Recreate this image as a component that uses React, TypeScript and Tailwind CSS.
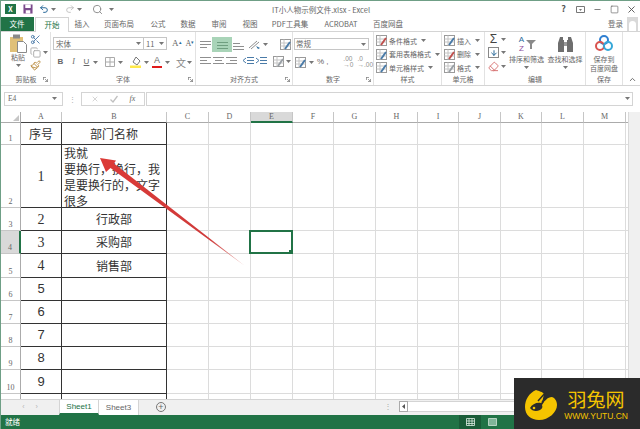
import {
  ArrowDown,
  ChevronUp,
  Copy,
  Eraser,
  Minus,
  Paintbrush,
  Scissors,
  Search,
  Square,
  Undo2,
  Redo2,
  X,
} from "lucide-react";

const cols = ["A", "B", "C", "D", "E", "F", "G", "H", "I", "J", "K", "L", "M", ""];
const rowNames = ["1", "2", "3", "4", "5", "6", "7", "8", "9", "10", ""];
const tabs = [
  ["插入", "w-[26px]"],
  ["页面布局", "w-[48px]"],
  ["公式", "w-[30px]"],
  ["数据", "w-[30px]"],
  ["审阅", "w-[32px]"],
  ["视图", "w-[30px]"],
  ["PDF工具集", "w-[50px]"],
  ["ACROBAT", "w-[52px]"],
  ["百度网盘", "w-[42px]"],
];

const Caret = () => (
  <svg width="5" height="3" viewBox="0 0 5 3" className="shrink-0">
    <path d="M0 0h5L2.5 3z" fill="#777" />
  </svg>
);

const Launcher = () => (
  <svg width="5" height="5" viewBox="0 0 5 5">
    <path d="M0 .5h3M.5 0v3M4.5 2v3M2 4.5h3M2 2l2.5 2.5" stroke="#888" strokeWidth="0.8" fill="none" />
  </svg>
);

// horizontal-line paragraph glyph used all over the alignment group
const Lines = ({ d, color = "#8f8f8f" }: { d: string; color?: string }) => (
  <svg width="11" height="10" viewBox="0 0 11 10">
    <path d={d} stroke={color} strokeWidth="1" fill="none" />
  </svg>
);

const Doc = ({ accent }: { accent: string }) => (
  <svg width="11" height="11" viewBox="0 0 11 11">
    <rect x="0.5" y="0.5" width="10" height="10" fill="#fff" stroke="#9a9a9a" />
    <path d="M.5 4h10M.5 7h10M4 .5v10" stroke="#c4c4c4" />
    <path d="M5 10 10 3" stroke={accent} strokeWidth="2" />
  </svg>
);

function Group({
  label,
  width,
  launcher,
  children,
}: {
  label: string;
  width: string;
  launcher?: boolean;
  children: React.ReactNode;
}) {
  return (
    <div className={`${width} h-full shrink-0 flex flex-col border-r border-[#e2e2e2]`}>
      <div className="flex-1 min-h-0">{children}</div>
      <div className="h-[11px] flex items-center justify-center relative text-[7px] leading-none text-[#666]">
        {label}
        {launcher && (
          <span className="absolute right-[2px] top-[3px] flex">
            <Launcher />
          </span>
        )}
      </div>
    </div>
  );
}

function StyleRow({ icon, text }: { icon: React.ReactNode; text: string }) {
  return (
    <div className="h-[13.5px] flex items-center gap-[2px] text-[7px] text-[#666]">
      {icon}
      <span>{text}</span>
      <span className="ml-[2px]">
        <Caret />
      </span>
    </div>
  );
}

function TitleBar() {
  return (
    <div className="h-[16px] flex items-center relative text-[#666]">
      <div className="w-[11px] h-[10px] ml-[4px] bg-[#217346] text-white text-[7px] leading-[10px] text-center font-bold">
        X
      </div>
      <svg width="10" height="10" viewBox="0 0 11 11" className="ml-[7px]">
        <path d="M.5.5h10v10H.5z" fill="#7b4a8c" />
        <path d="M2.5.5h6v4h-6zM3 7h5v3.5H3z" fill="#fff" />
      </svg>
      <Undo2 size={10} strokeWidth={2.4} className="ml-[6px] text-[#2a6a9a]" />
      <span className="ml-[2px]"><Caret /></span>
      <Redo2 size={10} strokeWidth={2} className="ml-[9px] text-[#bbbbbb]" />
      <span className="ml-[2px]"><Caret /></span>
      <Search size={11} className="ml-[10px] text-[#888]" />
      <span className="ml-[6px]"><Caret /></span>
      <span className="absolute left-[271px] top-[3px] text-[7.5px] leading-[11px] text-[#666]">
        IT小人物示例文件.xlsx - Excel
      </span>
      <div className="ml-auto flex items-center text-[#555]">
        <span className="w-[17px] text-center text-[9px] font-bold">?</span>
        <svg width="9" height="7" viewBox="0 0 9 7" className="mx-[4px]">
          <path d="M.5.5h8v6h-8z" fill="none" stroke="#777" />
          <path d="M3 3h3L4.500 5z" fill="#777" />
        </svg>
        <Minus size={9} strokeWidth={2} className="mx-[4px]" />
        <Square size={9} strokeWidth={1.6} className="mx-[4px]" />
        <X size={11} strokeWidth={2} className="mx-[3px]" />
      </div>
    </div>
  );
}

function TabRow() {
  return (
    <div className="h-[15px] flex items-stretch text-[7.5px] leading-none text-[#666] border-b border-[#d4d4d4]">
      <div className="w-[34px] -ml-px bg-[#217346] text-white flex items-center justify-center">文件</div>
      <div className="w-[34px] ml-px bg-white border border-b-0 border-[#d4d4d4] text-[#217346] flex items-center justify-center h-[15px]">
        开始
      </div>
      {tabs.map(([t, w]) => (
        <div key={t} className={`${w} flex items-center justify-center`}>
          {t}
        </div>
      ))}
      <div className="ml-auto flex items-center">
        <span className="mr-[4px]">登录</span>
        <div className="w-[11px] h-[14px] bg-[#d9d9d9] mr-[2px] flex items-end justify-center overflow-hidden">
          <div className="w-[7px] h-[10px] rounded-t-full bg-white" />
        </div>
      </div>
    </div>
  );
}

function Ribbon() {
  return (
    <div className="h-[54px] flex items-stretch border-b border-[#d4d4d4] pl-[1px] text-[#666]">
      <Group label="剪贴板" width="w-[49px]" launcher>
        <div className="flex pt-[2px] pl-[6px]">
          <div className="w-[20px] flex flex-col items-center">
            <svg width="17" height="19" viewBox="0 0 17 19">
              <rect x="0" y="3" width="13" height="15" fill="#e0c078" />
              <rect x="3" y="0.500" width="7" height="4" fill="#8a8a8a" />
              <path d="M7.500 7.500h6l3 3v8h-9z" fill="#fff" stroke="#8a8a8a" />
            </svg>
            <span className="text-[7px] leading-[9px]">粘贴</span>
            <span className="mt-[2px]"><Caret /></span>
          </div>
          <div className="ml-[2px] flex flex-col gap-[2px] items-start">
            <Scissors size={11} className="text-[#4a7ba8]" />
            <div className="flex items-center gap-[2px]">
              <Copy size={11} className="text-[#aaa]" />
              <Caret />
            </div>
            <Paintbrush size={11} className="text-[#b98a3c]" />
          </div>
        </div>
      </Group>

      <Group label="字体" width="w-[145px]" launcher>
        <div className="pl-[2px] pt-[5px]">
          <div className="flex items-center h-[13px]">
            <div className="w-[91px] h-[13px] border border-[#c6c6c6] flex items-center px-[2px] text-[7.5px]">
              宋体
              <span className="ml-auto"><Caret /></span>
            </div>
            <div className="w-[23px] h-[13px] border border-l-0 border-[#c6c6c6] flex items-center px-[2px] text-[7.5px]">
              11
              <span className="ml-auto"><Caret /></span>
            </div>
            <span className="ml-[5px] text-[9px] font-['Liberation_Serif',serif]">A</span>
            <span className="text-[5px] mb-[4px] text-[#2a6a9a]">▴</span>
            <span className="ml-[4px] text-[8px] font-['Liberation_Serif',serif]">A</span>
            <span className="text-[5px] mb-[4px] text-[#2a6a9a]">▾</span>
          </div>
          <div className="flex items-center mt-[6px] h-[12px] font-['Liberation_Sans',sans-serif] text-[8px]">
            <span className="w-[13px] ml-[1px] text-center font-bold">B</span>
            <span className="w-[13px] text-center italic font-['Liberation_Serif',serif]">I</span>
            <span className="w-[13px] text-center underline">U</span>
            <Caret />
            <svg width="10" height="10" viewBox="0 0 10 10" className="ml-[7px]">
              <path d="M.5.500h9v9h-9zM5 .5v9M.5 5h9" fill="none" stroke="#aaa" />
            </svg>
            <span className="ml-[3px]"><Caret /></span>
            <svg width="12" height="12" viewBox="0 0 12 12" className="ml-[7px]">
              <path d="M6 1l4 4-3 4-4-3z" fill="#fff" stroke="#777" />
              <rect x="0" y="9.500" width="11" height="2.500" fill="#ffe94a" />
            </svg>
            <span className="ml-[2px]"><Caret /></span>
            <div className="ml-[3px] w-[10px] h-[12px] flex flex-col items-center leading-[9px]">
              <span className="text-[9px]">A</span>
              <div className="w-[10px] h-[2px] mt-px bg-[#e01b1b]" />
            </div>
            <span className="ml-[3px]"><Caret /></span>
            <span className="ml-[6px] text-[10px] font-['Noto_Sans_CJK_SC',sans-serif] text-[#888]">文</span>
            <span className="ml-[1px]"><Caret /></span>
          </div>
        </div>
      </Group>

      <Group label="对齐方式" width="w-[97px]" launcher>
        <div className="pt-[5px] pl-[4px]">
          <div className="flex items-center h-[15px]">
            <Lines d="M0 1.500h11M0 4.500h11M0 7.500h7" />
            <div className="w-[20px] h-[15px] mx-[1px] bg-[#a9d4b8] flex items-center justify-center">
              <Lines d="M0 2.500h11M0 5.500h11M0 8.500h11" color="#6f9f80" />
            </div>
            <Lines d="M0 3.500h7M0 6.500h11M0 9.500h11" />
            <svg width="13" height="11" viewBox="0 0 13 11" className="ml-[4px]">
              <path d="M1 9 9 2M3 10l8-7" stroke="#8f8f8f" fill="none" />
              <path d="M8 7l4 2-2 1z" fill="#2a6a9a" />
            </svg>
            <span className="ml-[2px]"><Caret /></span>
            <span className="ml-[12px] flex"><Doc accent="#4a7ba8" /></span>
          </div>
          <div className="flex items-center h-[14px] mt-[2px] gap-[2px]">
            <Lines d="M0 1.500h11M0 4.500h7M0 7.500h11" />
            <Lines d="M0 1.500h11M2 4.500h7M0 7.500h11" />
            <Lines d="M0 1.500h11M4 4.500h7M0 7.500h11" />
            <span className="ml-[4px] flex"><Lines d="M4 1.500h7M4 4.500h7M4 7.500h7M3 2 0 4.500 3 7" color="#4a7ba8" /></span>
            <Lines d="M4 1.500h7M4 4.500h7M4 7.500h7M0 2l3 2.500L0 7" color="#4a7ba8" />
            <span className="ml-[4px] flex"><Doc accent="#9aa0a6" /></span>
            <Caret />
          </div>
        </div>
      </Group>

      <Group label="数字" width="w-[81px]" launcher>
        <div className="pt-[6px] pl-[1px]">
          <div className="w-[75px] h-[12px] border border-[#c6c6c6] flex items-center px-[1px] text-[7.5px]">
            常规
            <span className="ml-auto mr-[1px]"><Caret /></span>
          </div>
          <div className="flex items-center h-[14px] mt-[5px] text-[8px] font-['Liberation_Sans',sans-serif]">
            <span className="ml-[1px] flex"><Doc accent="#4a7ba8" /></span>
            <span className="ml-[3px]"><Caret /></span>
            <span className="ml-[3px]">%</span>
            <span className="ml-[2px]">,</span>
            <span className="ml-[15px] text-[6.500px] leading-[6px] text-[#8f8f8f] w-[16px]">.00 →0</span>
            <span className="text-[6.500px] leading-[6px] text-[#8f8f8f] w-[16px]">.0 →.00</span>
          </div>
        </div>
      </Group>

      <Group label="样式" width="w-[68px]">
        <div className="pt-[1px] pl-[2px] mt-[1px]">
          <StyleRow icon={<Doc accent="#c0504d" />} text="条件格式" />
          <StyleRow icon={<Doc accent="#4a7ba8" />} text="套用表格格式" />
          <StyleRow icon={<Doc accent="#4a7ba8" />} text="单元格样式" />
        </div>
      </Group>

      <Group label="单元格" width="w-[43px]">
        <div className="pt-[1px] pl-[2px] mt-[1px]">
          <StyleRow icon={<Doc accent="#4a7ba8" />} text="插入" />
          <StyleRow icon={<Doc accent="#c0504d" />} text="删除" />
          <StyleRow icon={<Doc accent="#9aa0a6" />} text="格式" />
        </div>
      </Group>

      <Group label="编辑" width="w-[101px]">
        <div className="flex pl-[3px]">
          <div className="w-[19px] pt-[2px] flex flex-col gap-[3px]">
            <div className="flex items-center gap-[2px] h-[10px]">
              <span className="w-[11px] text-[12px] leading-none text-[#444] text-center font-['Liberation_Sans',sans-serif]">Σ</span>
              <Caret />
            </div>
            <div className="flex items-center gap-[2px]">
              <div className="w-[11px] h-[11px] border border-[#888] flex items-center justify-center">
                <ArrowDown size={8} strokeWidth={3} className="text-[#2a6a9a]" />
              </div>
              <Caret />
            </div>
            <div className="flex items-center gap-[2px]">
              <Eraser size={11} className="text-[#d46a6a]" />
              <Caret />
            </div>
          </div>
          <div className="w-[39px] flex flex-col items-center text-[7px] leading-[9px] pt-[2px]">
            <div className="h-[20px] flex items-center">
              <span className="text-[8px] leading-[9px] text-center font-['Liberation_Sans',sans-serif] text-[#2a6a9a] w-[8px]">
                A<br />
                <span className="text-[#8e4f9e]">Z</span>
              </span>
              <svg width="10" height="10" viewBox="0 0 10 10">
                <path d="M0 1h10L6 5v5H4V5z" fill="#8a8a8a" />
              </svg>
            </div>
            <span className="mt-[1px] whitespace-nowrap">排序和筛选</span>
            <span className="mt-[2px]"><Caret /></span>
          </div>
          <div className="w-[38px] flex flex-col items-center text-[7px] leading-[9px] pt-[2px]">
            <svg width="17" height="20" viewBox="0 0 17 20">
              <path d="M3 3h3v3h1v12H1V9zM14 3h-3v3h-1v12h6V9z" fill="#6e6e6e" />
              <rect x="7" y="8" width="3" height="4" fill="#9a9a9a" />
            </svg>
            <span className="mt-[1px] whitespace-nowrap">查找和选择</span>
            <span className="mt-[2px]"><Caret /></span>
          </div>
        </div>
      </Group>

      <Group label="保存" width="w-[37px]">
        <div className="flex flex-col items-center text-[7px] leading-[9px] pt-[2px]">
          <svg width="18" height="18" viewBox="0 0 18 18" fill="none" strokeWidth="2">
            <circle cx="9" cy="6" r="4" stroke="#2f7fd1" />
            <circle cx="5" cy="12" r="4" stroke="#d9534f" />
            <circle cx="13" cy="12" r="4" stroke="#35a7d8" />
          </svg>
          <span className="mt-[3px] whitespace-nowrap">保存到</span>
          <span className="whitespace-nowrap">百度网盘</span>
        </div>
      </Group>

      <div className="flex-1 flex items-end justify-end pb-[1px] pr-[3px]">
        <ChevronUp size={9} strokeWidth={2.5} />
      </div>
    </div>
  );
}

function FormulaBar() {
  return (
    <div className="h-[26px] flex items-center pl-[3px] pr-[7px] pb-[1px] text-[#666]">
      <div className="w-[59px] h-[14px] border border-[#d4d4d4] flex items-center px-[3px] text-[7.5px] font-['Liberation_Serif',serif]">
        E4
        <span className="ml-auto mr-[2px]"><Caret /></span>
      </div>
      <div className="w-[18px] text-center text-[#aaa] text-[7px] leading-[4px]">
        ⋮
      </div>
      <div className="w-[64px] h-[14px] border border-[#d4d4d4] flex items-center justify-around px-[3px] text-[#c0c0c0]">
        <X size={8} />
        <svg width="8" height="8" viewBox="0 0 8 8">
          <path d="M.5 4.500 3 7 7.500 1" stroke="#c0c0c0" strokeWidth="1.300" fill="none" />
        </svg>
        <span className="text-[8px] italic font-['Liberation_Serif',serif] text-[#666]">fx</span>
      </div>
      <div className="flex-1 h-[14px] ml-[1px] border border-[#d4d4d4] flex items-center justify-end pr-[2px]">
        <Caret />
      </div>
    </div>
  );
}

function cellText(col: string, row: number) {
  if (col === "A") {
    if (row === 0) return <span className="text-[12px]">序号</span>;
    if (row <= 9) {
      return (
        <span
          className={
            row <= 4
              ? "text-[14px] font-['Liberation_Serif',serif]"
              : "text-[13px] font-['Liberation_Sans',sans-serif]"
          }
        >
          {row}
        </span>
      );
    }
  }
  if (col === "B") {
    if (row === 0) return <span className="text-[12px]">部门名称</span>;
    if (row === 1) {
      return (
        <div className="w-full self-start pl-[2px] pr-[3px] text-[12px] leading-[16px]">
          我就
          <br />
          要换行，换行，我是要换行的，文字很多
        </div>
      );
    }
    if (row === 2) return <span className="text-[12px]">行政部</span>;
    if (row === 3) return <span className="text-[12px]">采购部</span>;
    if (row === 4) return <span className="text-[12px]">销售部</span>;
  }
  return null;
}

function Sheet() {
  return (
    <div className="flex-1 min-h-0 flex overflow-hidden">
      <div className="flex-1 min-w-0 overflow-hidden">
        <div className="w-[640px] grid grid-cols-[20px_41px_105px_42px_42px_42px_41px_42px_42px_41px_42px_41px_42px_42px_10px] grid-rows-[11px_22px_63px_23px_23px_24px_23px_23px_23px_23px_24px_6px] text-[#333]">
          <div className="border-r border-b border-[#ababab] flex items-end justify-end p-[1px]">
            <svg width="6" height="6" viewBox="0 0 6 6">
              <path d="M6 0v6H0z" fill="#c6c6c6" />
            </svg>
          </div>
          {cols.map((c) => (
            <div
              key={c || "end"}
              className={`flex items-center justify-center text-[8px] leading-none font-['Liberation_Serif',serif] text-[#666] border-r border-[#c6c6c6] ${
                c === "E"
                  ? "bg-[#d9d9d9] border-b-2 border-b-[#217346]"
                  : c === "A" || c === "B"
                    ? "border-b border-b-[#444]"
                    : "border-b border-b-[#ababab]"
              }`}
            >
              {c}
            </div>
          ))}
          {rowNames.map((r, ri) => (
            <Row key={ri} name={r} ri={ri} />
          ))}
        </div>
      </div>
      <div className="w-[12px] shrink-0 bg-[#f0f0f0] border-l border-[#d9d9d9]" />
    </div>
  );
}

function Row({ name, ri }: { name: string; ri: number }) {
  const dark = ri <= 9;
  return (
    <>
      <div
        className={`flex items-end justify-center text-[8px] leading-[10px] font-['Liberation_Serif',serif] text-[#666] border-b border-[#c6c6c6] ${
          ri === 3 ? "bg-[#d9d9d9] border-r-2 border-r-[#217346]" : "border-r border-r-[#ababab]"
        }`}
      >
        {name}
      </div>
      {cols.map((c) => (
        <div
          key={c || "end"}
          className={`relative flex items-center justify-center border-r border-b text-[#333] font-['Noto_Sans_CJK_SC',sans-serif] ${
            c === "A" || c === "B"
              ? dark
                ? "border-[#333]"
                : "border-r-[#333] border-b-transparent"
              : "border-[#dcdcdc]"
          }`}
        >
          {cellText(c, ri)}
          {c === "E" && ri === 3 && (
            <div className="absolute -left-[2px] -top-px -right-px -bottom-px border-2 border-[#217346]">
              <div className="absolute -right-[2px] -bottom-[2px] w-[4px] h-[4px] bg-[#217346]" />
            </div>
          )}
        </div>
      ))}
    </>
  );
}

function SheetTabs() {
  return (
    <div className="h-[16px] flex items-stretch bg-[#f0f0f0] border-t border-[#d4d4d4] text-[8px] font-['Liberation_Sans',sans-serif] text-[#666]">
      <div className="w-[58px] flex items-center justify-center gap-[11px] text-[#b5b5b5] text-[7px]">
        <span>‹</span>
        <span>›</span>
      </div>
      <div className="w-[40px] bg-white border-x border-b-2 border-x-[#d4d4d4] border-b-[#217346] text-[#217346] flex items-center justify-center">
        Sheet1
      </div>
      <div className="w-[40px] bg-white border-r border-[#d4d4d4] flex items-center justify-center">
        Sheet3
      </div>
      <div className="ml-[17px] w-[10px] h-[10px] mt-[2px] rounded-full border border-[#777] flex items-center justify-center text-[9px] leading-none">
        +
      </div>
      <div className="ml-[218px] text-[#aaa] text-[8px] leading-[14px]">⋮</div>
      <div className="ml-[7px] w-[9px] h-[11px] mt-[1px] bg-white border border-[#aaa] flex items-center justify-center">
        <svg width="3" height="5" viewBox="0 0 3 5">
          <path d="M3 0v5L0 2.500z" fill="#555" />
        </svg>
      </div>
      <div className="flex-1 h-[11px] mt-[1px] bg-white border-y border-[#d4d4d4]" />
    </div>
  );
}

function StatusBar() {
  return (
    <div className="h-[14px] bg-[#217346] flex items-center pl-[4px] text-white text-[7.5px] leading-none">
      <span>就绪</span>
      <div className="ml-[439px] w-[22px] h-full bg-[#1a5c38] flex items-center justify-center">
        <svg width="9" height="8" viewBox="0 0 9 8">
          <path d="M.5.500h8v7h-8zM3 .5v7M6 .5v7M.5 3h8M.5 5.500h8" fill="none" stroke="#dfeee5" strokeWidth="0.800" />
        </svg>
      </div>
      <div className="w-[22px] h-full flex items-center justify-center">
        <svg width="9" height="8" viewBox="0 0 9 8">
          <path d="M.5.500h8v7h-8z" fill="#7fb598" stroke="#cfe3d7" strokeWidth="0.800" />
        </svg>
      </div>
    </div>
  );
}

function Watermark() {
  return (
    <div className="absolute right-0 bottom-0 w-[126px] h-[51px] bg-[#2b2b2b] flex items-center pl-[11px] pr-[12px] pt-[2px]">
      <svg width="32" height="30" viewBox="0 0 32 30" className="shrink-0">
        <path
          d="M11 0C4 3 0 10 0 17c0 8 6 13 14 13 10 0 18-8 18-15 0-4-2-7-5-8-5 0-6 4-10 6L19 4c-1-2-5-3-8-4z"
          fill="#f5c400"
        />
        <path d="M5 18c2-4 7-6 11-5l2-2 1 1-2 3c1 2 0 4-2 5-4 2-8 1-10-2z" fill="#2b2b2b" />
        <path d="M13 11 21 2M17 12l6-6" stroke="#2b2b2b" strokeWidth="1.500" />
        <circle cx="9" cy="18" r="1.300" fill="#f5c400" />
      </svg>
      <div className="ml-auto flex flex-col items-center text-[#f5c400]">
        <span className="text-[19px] leading-[21px] font-['Noto_Sans_CJK_SC',sans-serif] whitespace-nowrap">
          羽兔网
        </span>
        <span className="text-[8.500px] leading-[10px] mt-[2px] font-['Liberation_Sans',sans-serif] whitespace-nowrap">
          WWW.YUTU.CN
        </span>
      </div>
    </div>
  );
}

export default function App() {
  return (
    <div className="relative w-[640px] h-[429px] overflow-hidden bg-white flex flex-col border-l border-t border-[#6f9f86] font-['Noto_Sans_CJK_SC',sans-serif]">
      <TitleBar />
      <TabRow />
      <Ribbon />
      <FormulaBar />
      <Sheet />
      <SheetTabs />
      <StatusBar />
      {/* annotation drawn over the sheet */}
      <svg className="absolute -left-px -top-px pointer-events-none" width="640" height="429" viewBox="0 0 640 429">
        <defs>
          <linearGradient id="arrow" gradientUnits="userSpaceOnUse" x1="100" y1="158" x2="245" y2="266">
            <stop offset="0" stopColor="#dc3a36" />
            <stop offset="0.75" stopColor="#cf3a3a" />
            <stop offset="1" stopColor="#e8b4b0" />
          </linearGradient>
        </defs>
        <polygon points="100,158 116,160.500 114,163.500 245,266 110.500,168 106,172" fill="url(#arrow)" />
      </svg>
      <Watermark />
    </div>
  );
}
